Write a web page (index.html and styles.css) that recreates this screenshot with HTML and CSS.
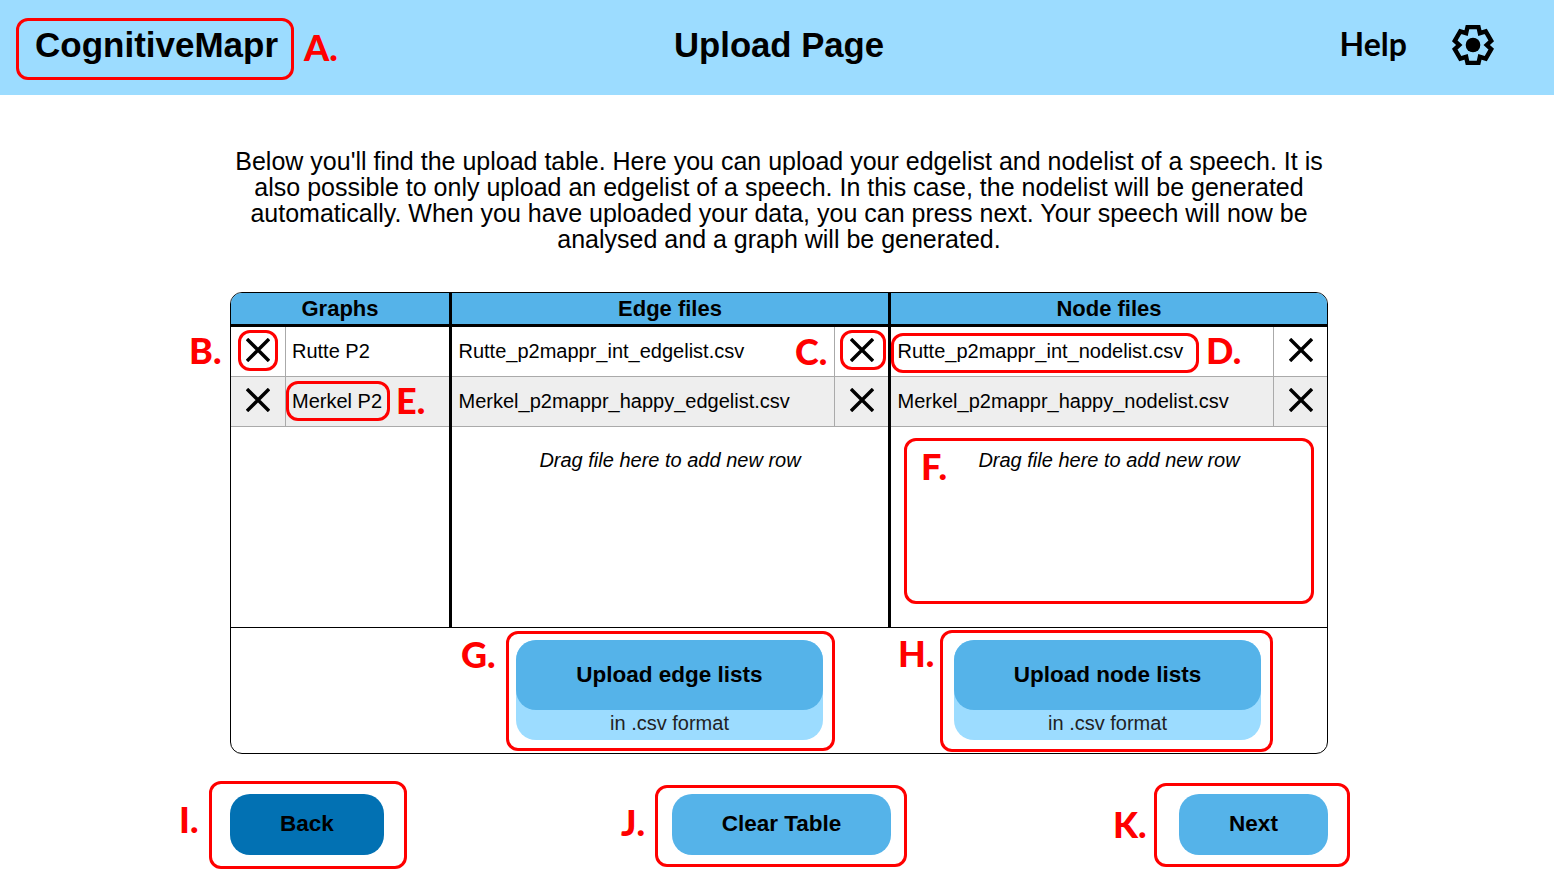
FILE: index.html
```html
<!DOCTYPE html>
<html lang="en">
<head>
    <meta charset="UTF-8">
    <title>CognitiveMapr - Upload Page</title>
    <link rel="stylesheet" href="styles.css">
</head>
<body>
    <header class="topbar">
        <div class="brand">CognitiveMapr</div>
        <div class="page-title">Upload Page</div>
        <div class="help">Help</div>
        <svg class="gear" viewBox="-24 -24 48 48">
            <polygon points="-6,-19.5 6,-19.5 7.5,-13 13.89,-14.95 19.89,-4.55 15.01,0 19.89,4.55 13.89,14.95 7.51,13 6,19.5 -6,19.5 -7.5,13 -13.89,14.95 -19.89,4.55 -15.01,0 -19.89,-4.55 -13.89,-14.95 -7.51,-13"/>
            <circle cx="0" cy="0" r="8"/>
        </svg>
    </header>

    <main class="content">
        <p class="intro">Below you'll find the upload table. Here you can upload your edgelist and nodelist of a speech. It is also possible to only upload an edgelist of a speech. In this case, the nodelist will be generated automatically. When you have uploaded your data, you can press next. Your speech will now be analysed and a graph will be generated.</p>

        <div class="upload-table">
            <div class="columns">
                <div class="col col-graphs">
                    <div class="col-head">Graphs</div>
                    <div class="row">
                        <div class="x-cell"><svg class="x-icon" viewBox="0 0 24 24"><path d="M1 1L23 23M23 1L1 23"/></svg></div>
                        <div class="name-cell">Rutte P2</div>
                    </div>
                    <div class="row row-alt">
                        <div class="x-cell"><svg class="x-icon" viewBox="0 0 24 24"><path d="M1 1L23 23M23 1L1 23"/></svg></div>
                        <div class="name-cell">Merkel P2</div>
                    </div>
                </div>
                <div class="col col-edges">
                    <div class="col-head">Edge files</div>
                    <div class="row">
                        <div class="name-cell">Rutte_p2mappr_int_edgelist.csv</div>
                        <div class="x-cell x-cell-end"><svg class="x-icon" viewBox="0 0 24 24"><path d="M1 1L23 23M23 1L1 23"/></svg></div>
                    </div>
                    <div class="row row-alt">
                        <div class="name-cell">Merkel_p2mappr_happy_edgelist.csv</div>
                        <div class="x-cell x-cell-end"><svg class="x-icon" viewBox="0 0 24 24"><path d="M1 1L23 23M23 1L1 23"/></svg></div>
                    </div>
                    <div class="drop-hint">Drag file here to add new row</div>
                </div>
                <div class="col col-nodes">
                    <div class="col-head">Node files</div>
                    <div class="row">
                        <div class="name-cell">Rutte_p2mappr_int_nodelist.csv</div>
                        <div class="x-cell x-cell-end"><svg class="x-icon" viewBox="0 0 24 24"><path d="M1 1L23 23M23 1L1 23"/></svg></div>
                    </div>
                    <div class="row row-alt">
                        <div class="name-cell">Merkel_p2mappr_happy_nodelist.csv</div>
                        <div class="x-cell x-cell-end"><svg class="x-icon" viewBox="0 0 24 24"><path d="M1 1L23 23M23 1L1 23"/></svg></div>
                    </div>
                    <div class="drop-hint">Drag file here to add new row</div>
                </div>
            </div>
            <div class="uploads">
                <div class="upload">
                    <div class="upload-btn">Upload edge lists</div>
                    <div class="upload-note">in .csv format</div>
                </div>
                <div class="upload">
                    <div class="upload-btn">Upload node lists</div>
                    <div class="upload-note">in .csv format</div>
                </div>
            </div>
        </div>

        <div class="actions">
            <div class="btn btn-back">Back</div>
            <div class="btn btn-clear">Clear Table</div>
            <div class="btn btn-next">Next</div>
        </div>
    </main>

    <!-- rode annotaties over de UI -->
    <div class="mark mark-a"></div><div class="tag tag-a">A.</div>
    <div class="mark mark-b"></div><div class="tag tag-b">B.</div>
    <div class="mark mark-c"></div><div class="tag tag-c">C.</div>
    <div class="mark mark-d"></div><div class="tag tag-d">D.</div>
    <div class="mark mark-e"></div><div class="tag tag-e">E.</div>
    <div class="mark mark-f"></div><div class="tag tag-f">F.</div>
    <div class="mark mark-g"></div><div class="tag tag-g">G.</div>
    <div class="mark mark-h"></div><div class="tag tag-h">H.</div>
    <div class="mark mark-i"></div><div class="tag tag-i">I.</div>
    <div class="mark mark-j"></div><div class="tag tag-j">J.</div>
    <div class="mark mark-k"></div><div class="tag tag-k">K.</div>
</body>
</html>
```

FILE: styles.css
```css
html, body {
    height: 883px;
    overflow: hidden;
}

body {
    margin: 0;
    position: relative;
    background: #fff;
    color: #000;
    font-family: 'Liberation Sans', Arial, sans-serif;
}

/* top bar */
.topbar {
    display: flex;
    align-items: center;
    height: 95px;
    padding: 0 60px 6px 35px;
    box-sizing: border-box;
    background: #9cdcff;
}

.brand {
    width: 639px;
    font-size: 35px;
    font-weight: bold;
}

.page-title {
    padding-top: 2px;
    font-size: 34.7px;
    font-weight: bold;
}

.help {
    margin-left: auto;
    margin-right: 44px;
    margin-bottom: 2px;
    font-family: Lato, sans-serif;
    font-size: 32px;
    font-weight: bold;
}

.gear {
    width: 44px;
    height: 44px;
    margin-right: -1px;
}

.gear polygon {
    fill: none;
    stroke: #000;
    stroke-width: 4.8;
    stroke-linejoin: miter;
}

.gear circle {
    fill: #000;
}

/* content */
.content {
    width: 1098px;
    margin-left: 230px;
}

.intro {
    margin: 53px 0 40px;
    font-size: 25px;
    line-height: 26px;
    text-align: center;
}

/* table */
.upload-table {
    border: 1px solid #000;
    border-radius: 12px;
    overflow: hidden;
}

.columns {
    display: flex;
    height: 334px;
    border-bottom: 1px solid #000;
}

.col {
    box-sizing: border-box;
}

.col-graphs {
    width: 221px;
    border-right: 3px solid #000;
}

.col-edges {
    width: 439px;
    border-right: 3px solid #000;
}

.col-nodes {
    flex: 1;
}

.col-head {
    height: 34px;
    box-sizing: border-box;
    border-bottom: 3px solid #000;
    background: #55b3e9;
    font-size: 22px;
    font-weight: bold;
    line-height: 31px;
    text-align: center;
}

.row {
    display: flex;
    height: 50px;
    box-sizing: border-box;
    border-bottom: 1px solid #aaa;
    font-size: 20px;
}

.row-alt {
    background: #eee;
}

.name-cell {
    flex: 1;
    padding-left: 6.5px;
    line-height: 48px;
    white-space: nowrap;
}

.col-graphs .name-cell {
    padding-left: 6px;
}

.x-cell {
    display: flex;
    align-items: center;
    justify-content: center;
    width: 55px;
    padding-bottom: 3px;
    box-sizing: border-box;
    border-right: 1px solid #aaa;
}

.x-cell-end {
    width: 54px;
    border-right: none;
    border-left: 1px solid #aaa;
}

.x-icon {
    width: 24px;
    height: 24px;
}

.x-icon path {
    fill: none;
    stroke: #000;
    stroke-width: 3.4;
}

.drop-hint {
    margin-top: 22px;
    font-size: 20px;
    font-style: italic;
    line-height: 23px;
    text-align: center;
}

/* upload buttons */
.uploads {
    display: flex;
    gap: 131px;
    padding: 12px 0 13px 285px;
}

.upload {
    width: 307px;
    height: 100px;
    border-radius: 20px;
    background: #9cdcff;
    text-align: center;
}

.upload-btn {
    height: 70px;
    border-radius: 20px;
    background: #55b3e9;
    font-size: 22.5px;
    font-weight: bold;
    line-height: 70px;
}

.upload-note {
    font-size: 20px;
    line-height: 27px;
    color: #222;
}

/* back / clear / next */
.actions {
    display: flex;
    justify-content: space-between;
    margin-top: 40px;
}

.btn {
    height: 61px;
    border-radius: 20px;
    font-size: 22.5px;
    font-weight: bold;
    line-height: 60px;
    text-align: center;
}

.btn-back {
    width: 154px;
    background: #0271b3;
}

.btn-clear {
    width: 219px;
    background: #55b3e9;
}

.btn-next {
    width: 149px;
    background: #55b3e9;
}

/* annotations */
.mark {
    position: absolute;
    box-sizing: border-box;
    border: 3px solid #f00;
    border-radius: 12px;
}

.tag {
    position: absolute;
    font-family: Lato, sans-serif;
    font-size: 36px;
    font-weight: 900;
    line-height: 37px;
    color: #f00;
}

.mark-a { left: 16px; top: 18px; width: 278px; height: 62px; }
.mark-b { left: 238px; top: 330px; width: 40px; height: 41px; }
.mark-c { left: 840px; top: 330px; width: 46px; height: 40px; }
.mark-d { left: 891px; top: 333px; width: 308px; height: 40px; }
.mark-e { left: 286px; top: 381px; width: 104px; height: 40px; }
.mark-f { left: 904px; top: 438px; width: 410px; height: 166px; }
.mark-g { left: 506px; top: 631px; width: 329px; height: 120px; }
.mark-h { left: 940px; top: 630px; width: 333px; height: 122px; }
.mark-i { left: 209px; top: 781px; width: 198px; height: 88px; }
.mark-j { left: 655px; top: 785px; width: 252px; height: 82px; }
.mark-k { left: 1154px; top: 783px; width: 196px; height: 84px; }

.tag-a { left: 304px; top: 29px; }
.tag-b { left: 189px; top: 332px; }
.tag-c { left: 795px; top: 333px; }
.tag-d { left: 1206px; top: 332px; }
.tag-e { left: 396px; top: 382px; }
.tag-f { left: 921px; top: 448px; }
.tag-g { left: 461px; top: 636px; }
.tag-h { left: 898px; top: 635px; }
.tag-i { left: 179px; top: 801px; }
.tag-j { left: 621px; top: 804px; }
.tag-k { left: 1113px; top: 806px; }
```
